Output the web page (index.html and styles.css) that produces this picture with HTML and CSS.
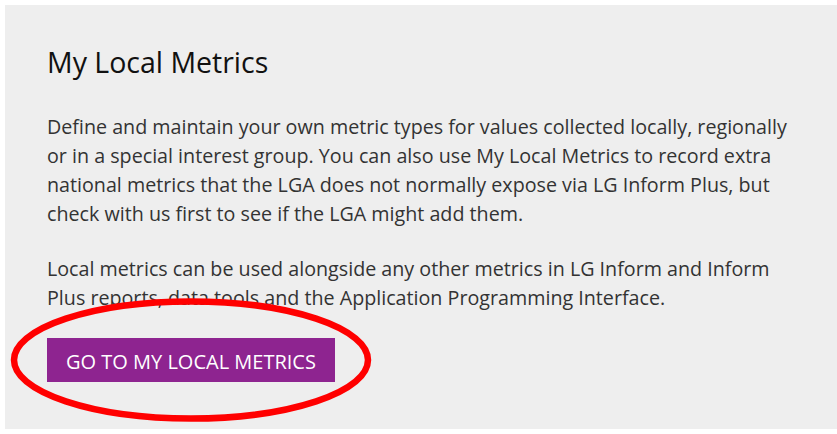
FILE: index.html
```html
<!DOCTYPE html>
<html lang="en">
<head>
  <meta charset="UTF-8" />
  <title>My Local Metrics</title>
  <meta name="viewport" content="width=device-width, initial-scale=1" />
  <link rel="stylesheet" href="styles.css">
</head>
<body>
  <div class="panel">
    <h2>My Local Metrics</h2>
    <p>Define and maintain your own metric types for values collected locally, regionally or in a special interest group. You can also use My Local Metrics to record extra national metrics that the LGA does not normally expose via LG Inform Plus, but check with us first to see if the LGA might add them.</p>
    <p>Local metrics can be used alongside any other metrics in LG Inform and Inform Plus reports, data tools and the Application Programming Interface.</p>
    <div class="action">
      <a class="btn" href="#">Go to My Local Metrics</a>
      <svg class="ring" width="370" height="132" viewBox="0 0 370 132">
        <ellipse cx="185" cy="66" rx="177" ry="58.5" fill="none" stroke="#f00" stroke-width="6.5" />
      </svg>
    </div>
  </div>
</body>
</html>
```

FILE: styles.css
```css
body { margin: 0; padding: 5px 0 6px 5px; background: #fff; font-family: "Open Sans", "Noto Sans", sans-serif; }
.panel { background: #eeeeee; padding: 40px 35px 47px 42px; color: #333; }
h2 { margin: 0 0 33px; font-size: 28.5px; font-weight: 400; color: #111; line-height: 1.2; }
p { margin: 0 0 26px; font-size: 19.7px; line-height: 29px; }
.action { position: relative; margin-top: 25px; }
.btn { display: inline-block; background: #8e2490; color: #fff; text-decoration: none; text-transform: uppercase; font-size: 20px; padding: 10px 19px 6px; line-height: 28px; }
.ring { position: absolute; left: -41.5px; top: -44px; pointer-events: none; }
```
